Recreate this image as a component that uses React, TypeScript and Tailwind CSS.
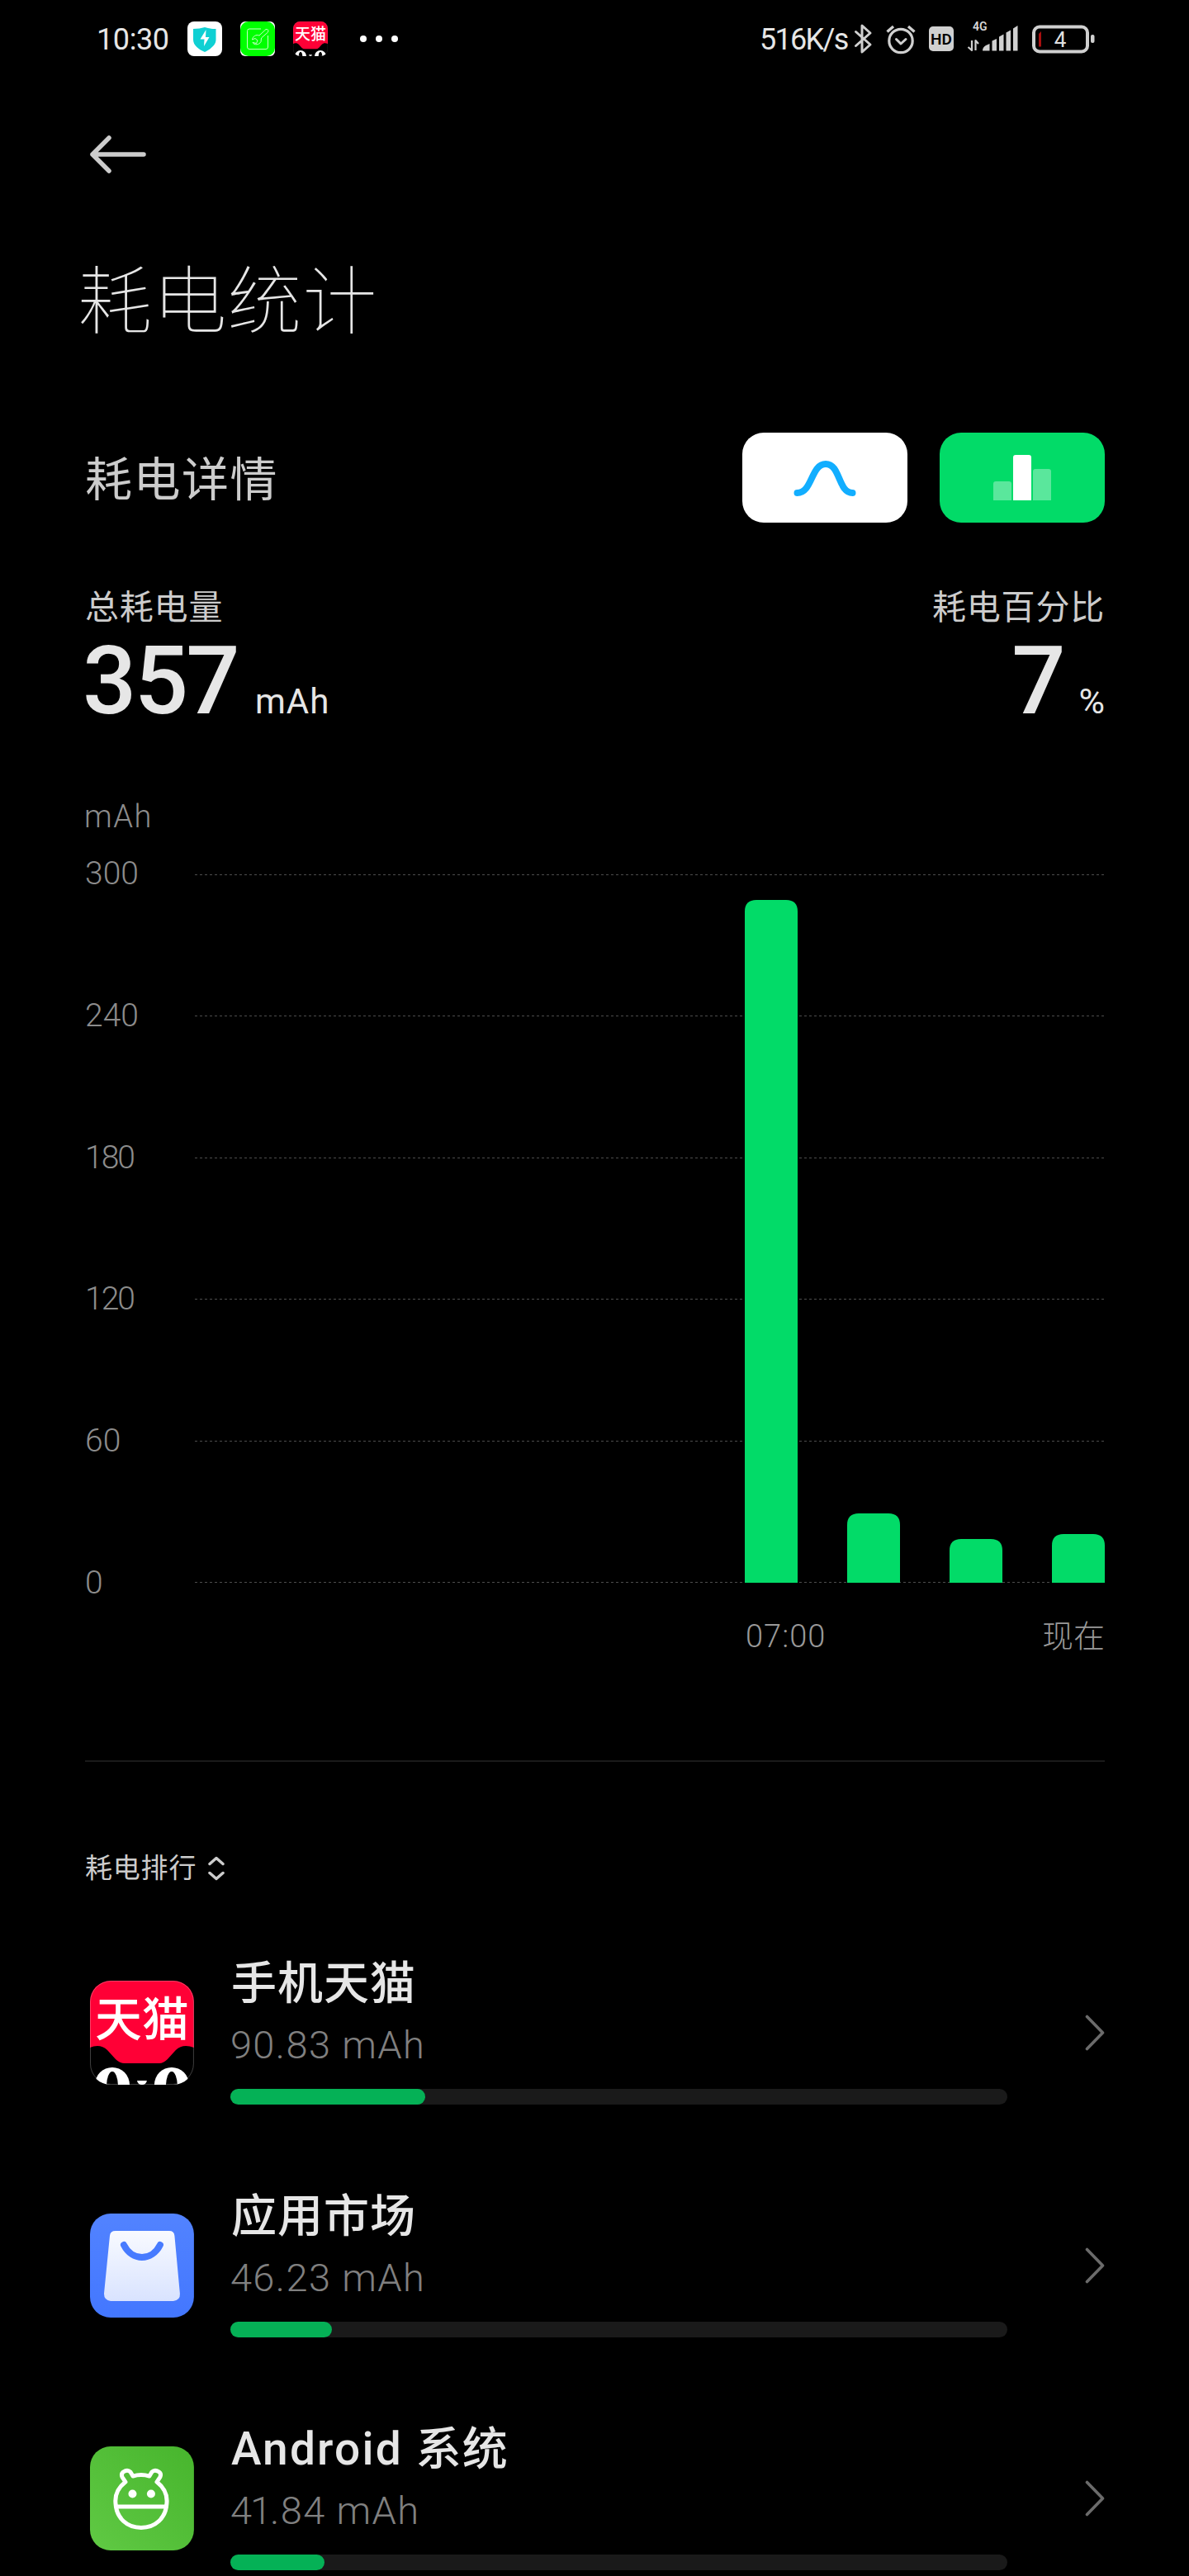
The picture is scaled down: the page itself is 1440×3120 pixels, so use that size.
import React from 'react';
import clsx from 'clsx';

type AppUsage = {
    name: React.ReactNode;
    usage: React.ReactNode;
    percent: number;
    icon: React.JSX.Element;
};

const TICKS = ['300', '240', '180', '120', '60', '0'];

const BARS = [
    { x: 666, height: 827 },
    { x: 790, height: 84 },
    { x: 914, height: 53 },
    { x: 1038, height: 59 },
];

const TmallIcon = ({ className }: { className: string }): React.JSX.Element => (
    <svg viewBox="0 0 126 126" className={className}>
        <defs>
            <clipPath id="tmall-clip">
                <rect width="126" height="126" rx="25" />
            </clipPath>
        </defs>
        <g clipPath="url(#tmall-clip)">
            <rect width="126" height="126" fill="#000" />
            <path
                d="M0 0H126V81C118 78 110 78 104 84L94 95Q89 100 84 100H42Q36 100 31 95L21 84C15 78 7 78 0 81Z"
                fill="#ff0036"
            />
            <circle cx="27" cy="126" r="21" fill="#fff" />
            <circle cx="99" cy="126" r="21" fill="#fff" />
            <ellipse cx="27" cy="128" rx="7" ry="18" fill="#000" />
            <ellipse cx="99" cy="128" rx="7" ry="18" fill="#000" />
            <path d="M57 121H69Q68 126 63 126Q58 126 57 121Z" fill="#fff" />
        </g>
        <text
            x="63"
            y="67"
            textAnchor="middle"
            fontSize="57"
            fontWeight="500"
            fill="#fff"
        >
            天猫
        </text>
        <rect
            x="0.5"
            y="0.5"
            width="125"
            height="125"
            rx="25"
            fill="none"
            stroke="#fff"
            strokeOpacity="0.25"
        />
    </svg>
);

const MarketIcon = ({ className }: { className: string }): React.JSX.Element => (
    <svg viewBox="0 0 126 126" className={className}>
        <defs>
            <linearGradient id="market-bg" x1="0" y1="0" x2="0" y2="1">
                <stop offset="0" stopColor="#5283ff" />
                <stop offset="1" stopColor="#4377ff" />
            </linearGradient>
            <linearGradient id="market-bag" x1="0" y1="0" x2="0" y2="1">
                <stop offset="0" stopColor="#f8faff" />
                <stop offset="1" stopColor="#d9e3ff" />
            </linearGradient>
        </defs>
        <rect width="126" height="126" rx="25" fill="url(#market-bg)" />
        <path
            d="M31 21H96Q102 21 102.500 27L109 97Q109.500 105 101 106H25Q17 105 17 97L24 27Q24.500 21 31 21Z"
            fill="url(#market-bag)"
        />
        <path
            d="M41 38C51 58 75 58 85 38"
            fill="none"
            stroke="#477bff"
            strokeWidth="8"
            strokeLinecap="round"
        />
    </svg>
);

const AndroidIcon = ({ className }: { className: string }): React.JSX.Element => (
    <svg viewBox="0 0 126 126" className={className}>
        <defs>
            <linearGradient id="android-bg" x1="0" y1="1" x2="1" y2="0">
                <stop offset="0" stopColor="#60c944" />
                <stop offset="1" stopColor="#47b52d" />
            </linearGradient>
        </defs>
        <rect width="126" height="126" rx="25" fill="url(#android-bg)" />
        <g fill="none" stroke="#fff" strokeWidth="5" strokeLinejoin="round">
            <path d="M52 36Q62 33 72 36L75 31Q78 28 82 30Q87 32 85 37L81 43C90 50 94 59 93 69C92 87 79 98.500 62 98.500C45 98.500 32 87 31 69C30 59 34 50 43 43L39 37Q37 32 42 30Q46 28 49 31Z" />
            <path d="M32 73H92" />
        </g>
        <circle cx="51.500" cy="57.500" r="5" fill="#fff" />
        <circle cx="74" cy="57.500" r="5" fill="#fff" />
    </svg>
);

const APPS: AppUsage[] = [
    {
        name: '手机天猫',
        usage: '90.83 mAh',
        percent: 25.05,
        icon: <TmallIcon className="size-[126px]" />,
    },
    {
        name: '应用市场',
        usage: '46.23 mAh',
        percent: 13.06,
        icon: <MarketIcon className="size-[126px]" />,
    },
    {
        name: (
            <>
                <span className="tracking-[2.2px]">Android </span>
                系统
            </>
        ),
        usage: (
            <>
                <span className="tracking-[-2px]">41</span>.84 mAh
            </>
        ),
        percent: 12.1,
        icon: <AndroidIcon className="size-[126px]" />,
    },
];

const ShieldIcon = (): React.JSX.Element => (
    <svg viewBox="0 0 42 42" className="size-[42px]">
        <rect width="42" height="42" rx="8" fill="#fff" />
        <path
            d="M7 9Q15 9 21 7Q27 9 34.500 9V22C34.500 29 27 34 21 37C14 34 7 29 7 22Z"
            fill="#0fd0d3"
        />
        <path d="M22.500 10L15.500 21.500H20.500L20 30L26.500 19H22Z" fill="#fff" />
    </svg>
);

const WrenchIcon = (): React.JSX.Element => (
    <svg viewBox="0 0 42 42" className="size-[42px]">
        <rect width="42" height="42" rx="6" fill="#fff" />
        <rect width="42" height="42" rx="10" fill="#00ff00" />
        <g fill="none" stroke="#c8ffc8" strokeWidth="1">
            <path d="M25 9H11Q8.500 9 8.500 11.500V31Q8.500 33.500 11 33.500H31Q33.500 33.500 33.500 31V17" />
            <path d="M31 9.500L23 17C19 15.500 15 18 14.500 22L18 20.500L21 23L19.500 26.500L15 25.500C17 29 23 28.500 25 24.500L25.500 20L33.500 13Q35 9 31 9.500Z" />
        </g>
    </svg>
);

const StatusBar = (): React.JSX.Element => (
    <header className="flex h-[94px] items-center pl-[117px] text-[#e6e6e6]">
        <span className="w-[110px] pt-0.5 text-[36px] leading-[42px] tracking-[-0.4px]">
            10:30
        </span>
        <div className="flex gap-[22px]">
            <ShieldIcon />
            <WrenchIcon />
            <TmallIcon className="size-[42px]" />
        </div>
        <div className="ml-[39px] flex gap-[11px]">
            <i className="size-2 rounded-full bg-white" />
            <i className="size-2 rounded-full bg-white" />
            <i className="size-2 rounded-full bg-white" />
        </div>
        <span className="ml-[438px] w-[113px] pt-0.5 text-[36px] leading-[42px] tracking-[-1.7px] whitespace-nowrap">
            516K/s
        </span>
        <svg
            viewBox="0 -10 295 60"
            className="h-[60px] w-[295px]"
            fill="none"
            stroke="#d0d0d0"
            strokeLinecap="round"
            strokeLinejoin="round"
        >
            {/* bluetooth */}
            <path
                d="M3.500 11.500L21 27L11 36V4L21 13L3.500 28.500"
                strokeWidth="3"
            />
            {/* alarm */}
            <circle cx="58" cy="22.500" r="14.200" strokeWidth="3.200" />
            <path d="M52.500 20.500L58 26L64 20.500" strokeWidth="3" />
            <path d="M41.500 11.500L49 5M67 5L74.500 11.500" strokeWidth="3.400" strokeLinecap="butt" />
            {/* hd */}
            <rect x="92" y="5" width="30" height="30" rx="5" fill="#d0d0d0" stroke="none" />
            <text
                x="107"
                y="27"
                textAnchor="middle"
                fontSize="19"
                fontWeight="600"
                fill="#000"
                stroke="none"
            >
                HD
            </text>
            {/* signal */}
            <text
                x="145"
                y="9.500"
                fontSize="14"
                fontWeight="600"
                fill="#d8d8d8"
                stroke="none"
            >
                4G
            </text>
            <path
                d="M144 22V34L139.500 30M148.500 34V22L152 26"
                strokeWidth="2.200"
                strokeLinecap="butt"
            />
            <g fill="#d0d0d0" stroke="none">
                <path d="M157 34.500Q157 30 161 28L165.500 26V34.500Z" />
                <path d="M168.500 22.500L174 20V34.500H168.500Z" />
                <path d="M177 17.500L182.500 14.500V34.500H177Z" />
                <path d="M185.500 12.500L191 9.500V34.500H185.500Z" />
                <path d="M194 7.500L199.500 4V34.500H194Z" />
            </g>
            {/* battery */}
            <rect x="219" y="5.500" width="65" height="30" rx="7" strokeWidth="4" />
            <rect x="288" y="15" width="4.500" height="10" rx="2" fill="#d0d0d0" stroke="none" />
            <path d="M228 11V29.500H225V14Z" fill="#a80f0f" stroke="none" />
            <text
                x="251"
                y="29.500"
                textAnchor="middle"
                fontSize="26"
                fill="#e0e0e0"
                stroke="none"
            >
                4
            </text>
        </svg>
    </header>
);

const UsageChart = (): React.JSX.Element => (
    <div>
        <div className="flex h-[937px]">
            <div className="flex w-[133px] flex-col justify-between text-[39px] leading-[78px] font-light text-[#8c8c8c]">
                {TICKS.map((tick) => (
                    <span
                        key={tick}
                        className={clsx(tick.startsWith('1') && 'tracking-[-2px]')}
                    >
                        {tick}
                    </span>
                ))}
            </div>
            <svg viewBox="0 0 1102 937" className="h-[937px] w-[1102px]">
                {TICKS.map((tick, i) => (
                    <line
                        key={tick}
                        x1="0"
                        x2="1102"
                        y1={Math.round(40 + i * 171.4) + 0.5}
                        y2={Math.round(40 + i * 171.4) + 0.5}
                        stroke="#4d4d4d"
                        strokeDasharray="3 3"
                    />
                ))}
                {BARS.map(({ x, height }) => (
                    <path
                        key={x}
                        d={`M${x} 898V${898 - height + 14}q0 -14 14 -14h36q14 0 14 14V898Z`}
                        fill="#02db68"
                    />
                ))}
            </svg>
        </div>
        <div className="flex h-[51px] justify-between pl-[800px] text-[38px] leading-[53px] font-light text-[#999]">
            <span className="tracking-[1px]">07:00</span>
            <span>现在</span>
        </div>
    </div>
);

const UsageRow = ({ app }: { app: AppUsage }): React.JSX.Element => (
    <li className="flex h-[282px] items-center pl-1.5">
        {app.icon}
        <div className="ml-[44px] h-[282px] w-[942px] pt-[43px]">
            <h3 className="pl-px text-[55px] leading-[76px] font-medium tracking-[1px] text-[#e6e6e6]">
                {app.name}
            </h3>
            <p className="text-[47px] leading-[74px] font-light tracking-[1.4px] text-[#808080]">
                {app.usage}
            </p>
            <div className="mt-[16px] h-[19px] rounded-full bg-[#1a1a1a]">
                <div
                    className="h-full rounded-full bg-[#05b156]"
                    style={{ width: `${app.percent}%` }}
                />
            </div>
        </div>
        <svg viewBox="0 0 24 44" className="ml-[94px] h-[44px] w-[24px]">
            <path
                d="M2.500 2.500L21.500 22L2.500 41.500"
                fill="none"
                stroke="#6b6b6b"
                strokeWidth="3.600"
                strokeLinecap="round"
                strokeLinejoin="round"
            />
        </svg>
    </li>
);

const App = (): React.JSX.Element => (
    <div className="h-[3120px] w-[1440px] overflow-hidden bg-black font-['Roboto','Noto_Sans_CJK_SC',sans-serif]">
        <StatusBar />
        <main className="pr-[102px] pl-[103px]">
            <div className="flex h-[185px] items-center pl-[5px]">
                <svg viewBox="0 0 70 50" className="h-[50px] w-[70px]">
                    <path
                        d="M66 25H4M24 5L4 25L24 45"
                        fill="none"
                        stroke="#ccc"
                        strokeWidth="5.500"
                        strokeLinecap="round"
                        strokeLinejoin="round"
                    />
                </svg>
            </div>
            <h1 className="-ml-[9px] h-[166px] text-[90px] leading-[175px] font-thin tracking-[0.8px] text-[#e6e6e6]">
                耗电统计
            </h1>

            <div className="mt-[79px] flex h-[109px] items-center justify-between">
                <h2 className="pt-[5px] text-[57px] leading-[109px] tracking-[1.5px] text-[#ccc]">
                    耗电详情
                </h2>
                <div className="flex gap-[39px]">
                    <button className="flex h-[109px] w-[200px] items-center justify-center rounded-[26px] bg-white">
                        <svg viewBox="0 0 76 44" className="h-[44px] w-[76px]">
                            <path
                                d="M4.500 40C23 40 21 5 39 5S54 40 71.500 40"
                                fill="none"
                                stroke="#12aeff"
                                strokeWidth="8"
                                strokeLinecap="round"
                            />
                        </svg>
                    </button>
                    <button className="flex h-[109px] w-[200px] items-end justify-center gap-0.5 rounded-[26px] bg-[#02db68] pb-[27px]">
                        <i className="h-[23px] w-[22px] rounded-t-[3px] bg-white/35" />
                        <i className="h-[55px] w-[22px] rounded-t-[3px] bg-white" />
                        <i className="h-[38px] w-[22px] rounded-t-[3px] bg-white/35" />
                    </button>
                </div>
            </div>

            <div className="mt-[72px] flex h-[180px] justify-between text-[#e6e6e6]">
                <div>
                    <p className="h-[60px] text-[41px] leading-[62px] tracking-[0.8px] text-[#ccc]">
                        总耗电量
                    </p>
                    <p className="-ml-[3px] text-[115px] leading-[120px] font-medium tracking-[-2.7px]">
                        357
                        <span className="ml-[21px] text-[42px] leading-none font-normal tracking-[1px]">
                            mAh
                        </span>
                    </p>
                </div>
                <div className="text-right">
                    <p className="h-[60px] text-[41px] leading-[62px] tracking-[0.8px] text-[#ccc]">
                        耗电百分比
                    </p>
                    <p className="text-[115px] leading-[120px] font-medium">
                        7
                        <span className="ml-[16px] text-[43px] leading-none font-normal">%</span>
                    </p>
                </div>
            </div>

            <p className="mt-[74px] -ml-px h-[60px] text-[38px] leading-[60px] font-light tracking-[1.5px] text-[#8c8c8c]">
                mAh
            </p>
            <UsageChart />

            <div className="mt-[125px] h-0.5 bg-[#1a1a1a]" />

            <div className="mt-[104px] flex h-[50px] items-center">
                <h2 className="text-[33px] leading-[50px] tracking-[0.8px] text-[#ccc]">
                    耗电排行
                </h2>
                <svg viewBox="0 0 22 30" className="ml-[13px] h-[30px] w-[22px]">
                    <path
                        d="M3 9.500L11 2.500L19 9.500M3 20.500L11 27.500L19 20.500"
                        fill="none"
                        stroke="#ccc"
                        strokeWidth="3.500"
                        strokeLinecap="round"
                        strokeLinejoin="round"
                    />
                </svg>
            </div>
            <ul className="mt-[33px]">
                {APPS.map((app, i) => (
                    <UsageRow key={i} app={app} />
                ))}
            </ul>
        </main>
    </div>
);

export default App;
